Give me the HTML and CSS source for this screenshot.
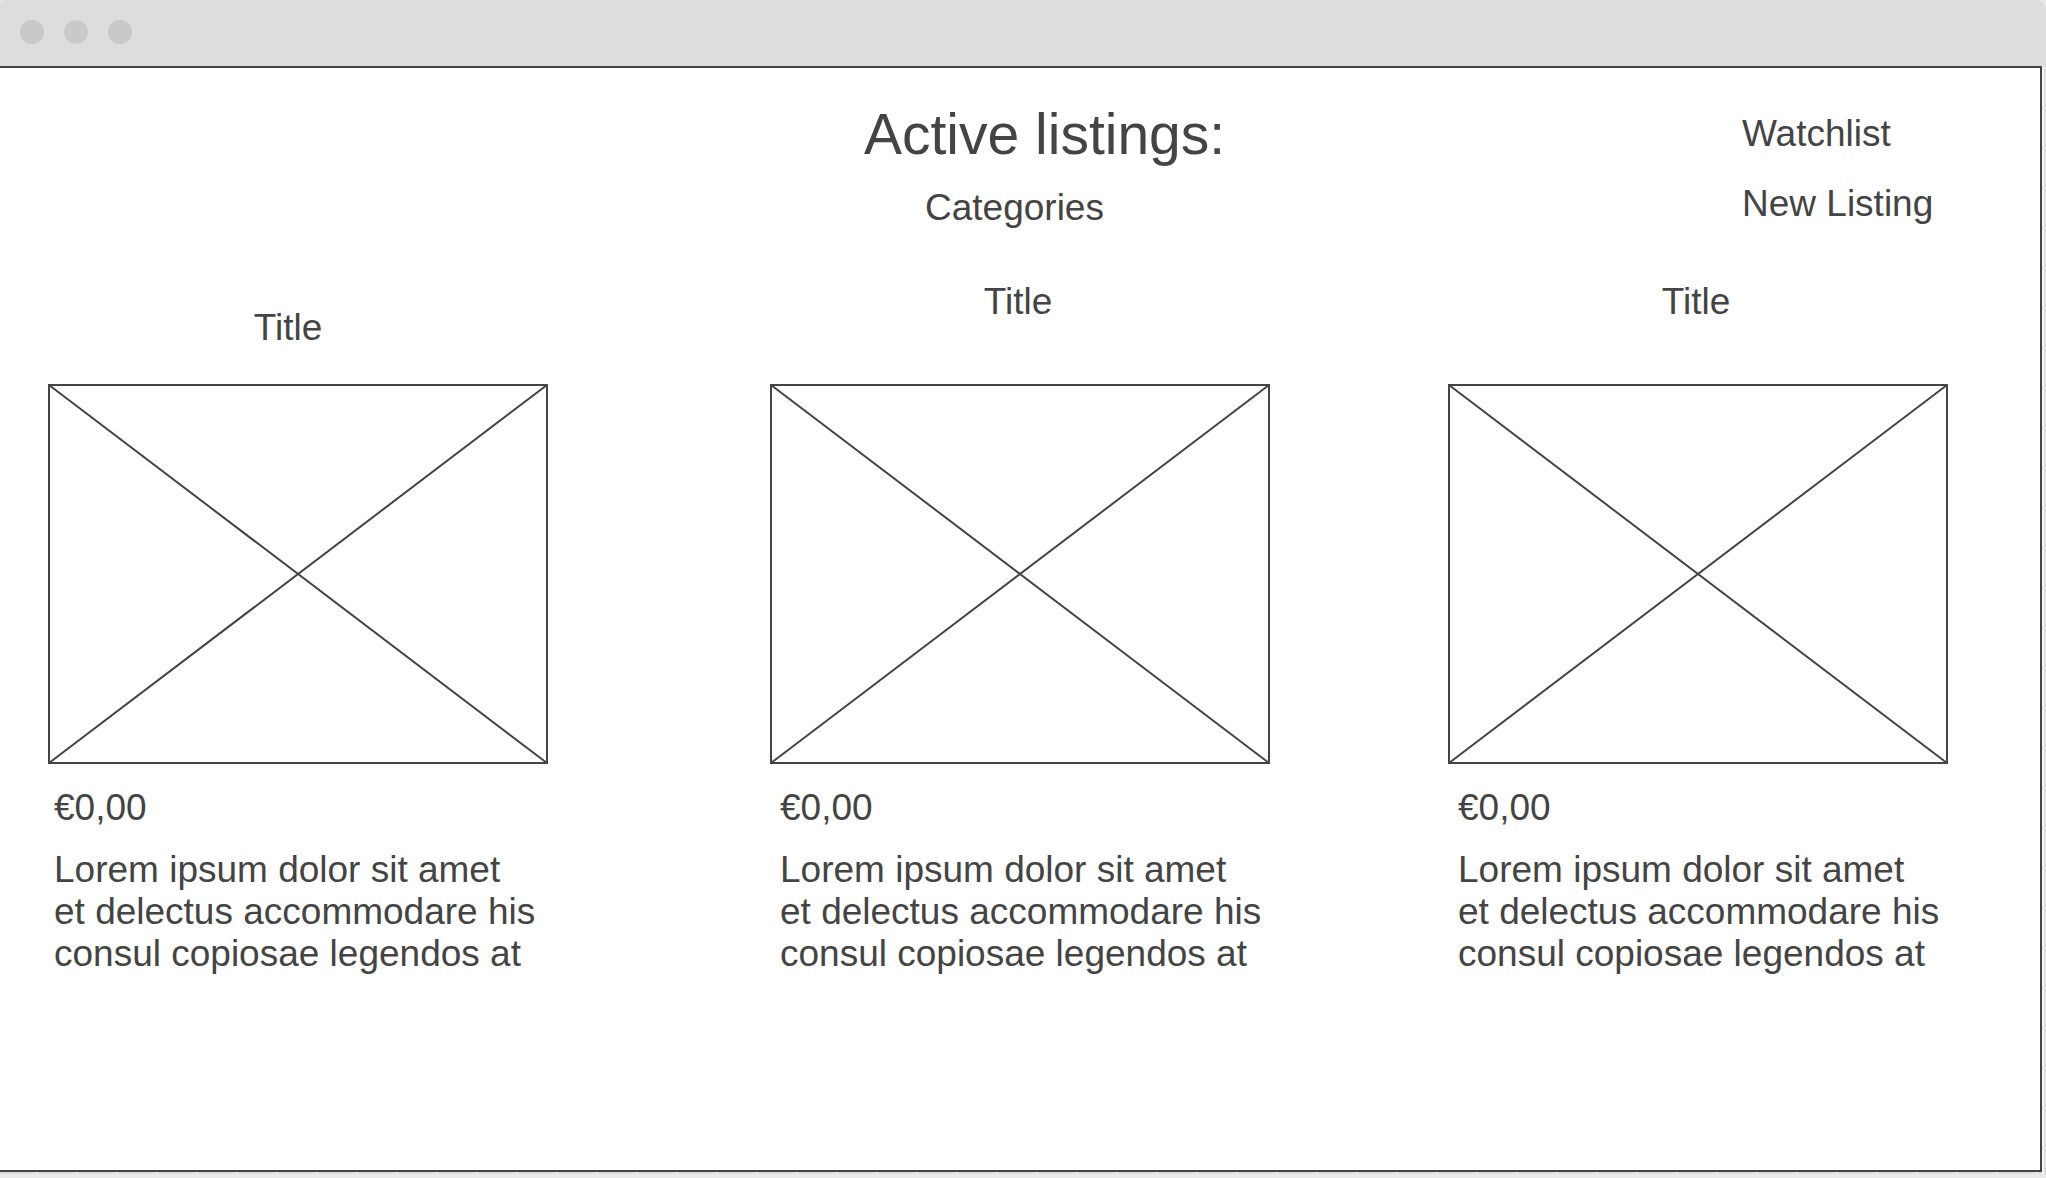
FILE: index.html
```html
<!DOCTYPE html>
<html lang="en">
<head>
<meta charset="utf-8">
<title>Active listings</title>
<link rel="stylesheet" href="styles.css">
</head>
<body>
<div class="window">
  <div class="titlebar">
    <span class="dot"></span>
    <span class="dot"></span>
    <span class="dot"></span>
  </div>
  <div class="page">
    <header class="header">
      <div class="heading">
        <h1 class="heading-title">Active listings:</h1>
        <a class="link categories" href="#categories">Categories</a>
      </div>
      <nav class="nav">
        <a class="link" href="#watchlist">Watchlist</a>
        <a class="link" href="#new-listing">New Listing</a>
      </nav>
    </header>
    <main class="listings">
      <article class="card card-first">
        <h2 class="card-title">Title</h2>
        <svg class="card-image" viewBox="0 0 500 380" role="img" aria-label="Listing image">
          <rect x="1" y="1" width="498" height="378"/>
          <path d="M1 1 499 379M499 1 1 379"/>
        </svg>
        <div class="card-text">
          <p class="price">€0,00</p>
          <p class="description">Lorem ipsum dolor sit amet<br>et delectus accommodare his<br>consul copiosae legendos at</p>
        </div>
      </article>
      <article class="card card-second">
        <h2 class="card-title">Title</h2>
        <svg class="card-image" viewBox="0 0 500 380" role="img" aria-label="Listing image">
          <rect x="1" y="1" width="498" height="378"/>
          <path d="M1 1 499 379M499 1 1 379"/>
        </svg>
        <div class="card-text">
          <p class="price">€0,00</p>
          <p class="description">Lorem ipsum dolor sit amet<br>et delectus accommodare his<br>consul copiosae legendos at</p>
        </div>
      </article>
      <article class="card card-third">
        <h2 class="card-title">Title</h2>
        <svg class="card-image" viewBox="0 0 500 380" role="img" aria-label="Listing image">
          <rect x="1" y="1" width="498" height="378"/>
          <path d="M1 1 499 379M499 1 1 379"/>
        </svg>
        <div class="card-text">
          <p class="price">€0,00</p>
          <p class="description">Lorem ipsum dolor sit amet<br>et delectus accommodare his<br>consul copiosae legendos at</p>
        </div>
      </article>
    </main>
  </div>
</div>
</body>
</html>
```

FILE: styles.css
```css
* {
  box-sizing: border-box;
}

body {
  margin: 0;
  background: #eaeaea;
  color: #444;
  font-family: "Liberation Sans", Arial, sans-serif;
  font-size: 37px;
  line-height: 42px;
}

h1,
h2,
p {
  margin: 0;
  font-weight: normal;
}

.window {
  display: flex;
  flex-direction: column;
  min-height: 100vh;
  padding-bottom: 4px;
}

.titlebar {
  display: flex;
  align-items: center;
  gap: 20px;
  height: 66px;
  padding: 0 20px 2px;
  background: #ddd;
  border-radius: 4px 10px 0 0;
}

.dot {
  width: 24px;
  height: 24px;
  border-radius: 50%;
  background: #c9c9c9;
}

/* The page sits on a canvas whose grid shows at the right and bottom edges. */
.page {
  flex: 1;
  display: flex;
  flex-direction: column;
  padding: 0 4px 2px 0;
  background:
    repeating-linear-gradient(transparent 0 1px, #ebebeb 1px 3px, transparent 3px 40px) right top / 4px 100% no-repeat,
    linear-gradient(#f6f6f6, #f6f6f6) right 2px top / 2px 100% no-repeat,
    repeating-linear-gradient(90deg, transparent 0 36px, #f0f0f0 36px 38px, transparent 38px 40px) left bottom / 100% 2px no-repeat,
    #ddd;
}

.header,
.listings {
  display: grid;
  background: #fff;
  border-right: 2px solid #444;
}

.header {
  grid-template-columns: 864fr 364fr 514fr 298fr;
  padding: 34px 0 52px;
  border-top: 2px solid #444;
}

.heading {
  grid-column: 2;
  display: flex;
  flex-direction: column;
  align-items: flex-start;
  gap: 21px;
  white-space: nowrap;
}

.heading-title {
  font-size: 57px;
  line-height: 64px;
}

.link {
  color: inherit;
  text-decoration: none;
}

.categories {
  margin-left: 61px;
}

.nav {
  grid-column: 4;
  display: flex;
  flex-direction: column;
  align-items: flex-start;
  gap: 28px;
  padding-top: 11px;
  white-space: nowrap;
}

.listings {
  flex: 1;
  grid-template-columns: 48fr 500fr 222fr 500fr 178fr 500fr 92fr;
  border-bottom: 2px solid #444;
}

.card {
  min-width: 0;
}

.card-first {
  grid-column: 2;
}

.card-second {
  grid-column: 4;
}

.card-third {
  grid-column: 6;
}

.card-title {
  padding: 0 4px 61px 0;
  font-size: 37px;
  text-align: center;
}

.card-first .card-title {
  padding: 26px 20px 35px 0;
}

.card-image {
  display: block;
  width: 100%;
  fill: none;
  stroke: #444;
  stroke-width: 2px;
}

.card-text {
  display: flex;
  flex-direction: column;
  gap: 20px;
  padding: 23px 0 0 10px;
  white-space: nowrap;
}

.card-first .card-text {
  padding-left: 6px;
}
```
